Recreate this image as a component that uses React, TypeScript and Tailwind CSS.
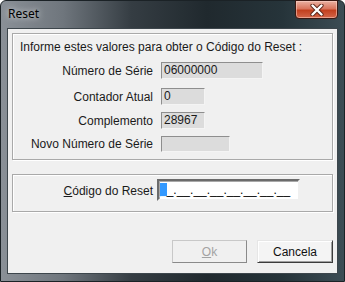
import type { ReactNode } from 'react';

const font = { fontFamily: '"Liberation Sans", Arial, sans-serif' };

function ReadonlyField({ value, width, height = 'h-[17px]' }: { value: string; width: string; height?: string }) {
  return (
    <div
      className={`${width} ${height} bg-[#dcdcdc] border border-t-[#8e8e8e] border-l-[#8e8e8e] border-b-[#f4f4f4] border-r-[#f4f4f4] pl-[2px] text-[12px] leading-[15px] text-[#1a1a1a]`}
    >
      {value}
    </div>
  );
}

function Row({ label, children, className = '' }: { label: string; children: ReactNode; className?: string }) {
  return (
    <div className={`flex items-center gap-[8px] ${className}`}>
      <span className="w-[140px] text-right text-[12px] leading-[14px] text-[#1a1a1a]">{label}</span>
      {children}
    </div>
  );
}

function Button({ children, disabled }: { children: ReactNode; disabled?: boolean }) {
  return (
    <button
      disabled={disabled}
      className={
        disabled
          ? 'w-[75px] h-[23px] bg-[#f0f0f0] border border-t-[#c8c8c8] border-l-[#c8c8c8] border-b-[#8a8a8a] border-r-[#8a8a8a] text-[12px] text-[#a3a3a3]'
          : 'w-[76px] h-[23px] bg-[#f4f4f4] border border-t-[#e6e6e6] border-l-[#e6e6e6] border-b-[#3c3c3c] border-r-[#3c3c3c] shadow-[inset_1px_1px_0_#ffffff,inset_-1px_-1px_0_#a0a0a0] text-[12px] text-[#111]'
      }
    >
      {children}
    </button>
  );
}

export default function App() {
  return (
    <div
      className="w-[345px] h-[282px] flex flex-col rounded-t-[6px] border border-[#1b2226] bg-[linear-gradient(90deg,#8a9097_0%,#6f767d_18%,#353d43_38%,#20292e_60%,#26343a_82%,#3c4c54_100%)]"
      style={font}
    >
      <div className="relative h-[27px] flex items-start">
        <span className="ml-[7px] mt-[6px] text-[12px] leading-[14px] text-black [text-shadow:0_0_6px_rgba(255,255,255,0.9)]" style={{ fontFamily: '"Noto Sans", "Liberation Sans", sans-serif' }}>
          Reset
        </span>
        <div className="absolute right-[6px] top-[-1px] w-[43px] h-[19px] rounded-b-[4px] border border-[#3a1812] bg-[linear-gradient(180deg,#eab1a2_0%,#d9755d_45%,#c2401f_55%,#d4664a_100%)] flex items-center justify-center shadow-[inset_0_0_0_1px_rgba(255,220,210,0.5)]">
          <svg width="14" height="12" viewBox="0 0 14 12">
            <path d="M2.5 1.5 L11.5 10.5 M11.5 1.5 L2.5 10.5" stroke="#5a2418" strokeWidth="4.2" strokeLinecap="round" />
            <path d="M2.5 1.5 L11.5 10.5 M11.5 1.5 L2.5 10.5" stroke="#ffffff" strokeWidth="2.4" strokeLinecap="round" />
          </svg>
        </div>
      </div>

      <div className="mx-[6px] h-[246px] border border-[#3d464c] bg-[#f0f0f0] px-[4px] pt-[4px] flex flex-col">
        <div className="h-[127px] border border-[#a9a9a9] shadow-[inset_1px_1px_0_#ffffff,1px_1px_0_#ffffff] pt-[6px]">
          <div className="ml-[7px] text-[12px] leading-[14px] text-[#1a1a1a]">Informe estes valores para obter o Código do Reset :</div>
          <Row label="Número de Série" className="mt-[8px]">
            <ReadonlyField value="06000000" width="w-[102px]" />
          </Row>
          <Row label="Contador Atual" className="mt-[9px]">
            <ReadonlyField value="0" width="w-[44px]" />
          </Row>
          <Row label="Complemento" className="mt-[7px]">
            <ReadonlyField value="28967" width="w-[44px]" />
          </Row>
          <Row label="Novo Número de Série" className="mt-[7px]">
            <ReadonlyField value="" width="w-[69px]" height="h-[16px]" />
          </Row>
        </div>

        <div className="mt-[14px] h-[38px] border border-[#a9a9a9] shadow-[inset_1px_1px_0_#ffffff,1px_1px_0_#ffffff] pt-[4px] flex items-start gap-[4px]">
          <span className="w-[140px] mt-[5px] text-right text-[12px] leading-[14px] text-[#1a1a1a]">
            <span className="underline">C</span>ódigo do Reset
          </span>
          <div className="w-[143px] h-[22px] bg-white border-2 border-t-[#6b6b6b] border-l-[#6b6b6b] border-b-[#f0f0f0] border-r-[#f0f0f0] shadow-[inset_1px_1px_0_#a8a8a8] pl-[1px] pt-[2px] text-[12px] leading-[15px] text-black whitespace-nowrap">
            <span className="bg-[#3399ff] text-white">_</span>_.__.__.__.__.__.__.__
          </div>
        </div>

        <div className="mt-[28px] flex justify-end gap-[10px]">
          <Button disabled>
            <span className="underline">O</span>k
          </Button>
          <Button>Cancela</Button>
        </div>
      </div>
    </div>
  );
}
